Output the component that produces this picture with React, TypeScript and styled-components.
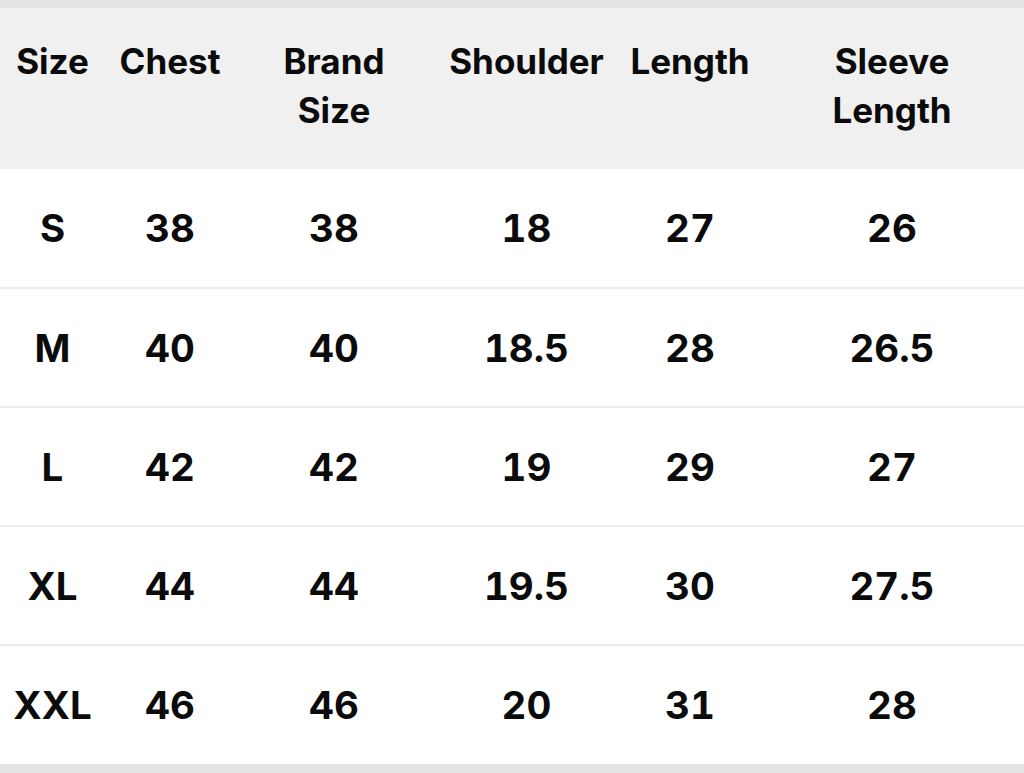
import styled, { createGlobalStyle } from "styled-components";

const GlobalStyle = createGlobalStyle`
  html, body {
    margin: 0;
    padding: 0;
    background: #ffffff;
  }
  body {
    font-family: Inter, "Noto Sans", sans-serif;
    color: #0b0b0b;
  }
`;

const Page = styled.div`
  display: flex;
  flex-direction: column;
  width: 1024px;
  height: 773px;
  overflow: hidden;
  background: #ffffff;
`;

const Strip = styled.div<{ $h: number }>`
  height: ${(p) => p.$h}px;
  background: #e4e4e4;
  flex-shrink: 0;
`;

const Table = styled.table`
  width: 100%;
  border-collapse: collapse;
  table-layout: fixed;
  flex: 1;
`;

const HeadRow = styled.tr`
  background: #f0f0f0;
  height: 161px;
`;

const HeadCell = styled.th`
  vertical-align: top;
  padding: 29px 0 0 0;
  font-size: 35px;
  line-height: 49px;
  font-weight: 700;
  text-align: center;
`;

const BodyRow = styled.tr<{ $last?: boolean }>`
  height: 117px;
  border-bottom: ${(p) => (p.$last ? "none" : "2px solid #ececec")};
`;

const Cell = styled.td`
  vertical-align: middle;
  text-align: center;
  font-size: 38.5px;
  font-weight: 700;
  font-variant-numeric: tabular-nums;
  padding: 0;
`;

const widths = [105, 130, 198, 187, 140, 264];
const headers = ["Size", "Chest", "Brand Size", "Shoulder", "Length", "Sleeve Length"];
const rows = [
  ["S", "38", "38", "18", "27", "26"],
  ["M", "40", "40", "18.5", "28", "26.5"],
  ["L", "42", "42", "19", "29", "27"],
  ["XL", "44", "44", "19.5", "30", "27.5"],
  ["XXL", "46", "46", "20", "31", "28"],
];

const App = () => {
  return (
    <>
      <GlobalStyle />
      <Page>
        <Strip $h={8} />
        <Table>
          <colgroup>
            {widths.map((w, i) => (
              <col key={i} style={{ width: w }} />
            ))}
          </colgroup>
          <thead>
            <HeadRow>
              {headers.map((h) => (
                <HeadCell key={h}>
                  {h.split(" ").map((part, i) => (
                    <div key={i}>{part}</div>
                  ))}
                </HeadCell>
              ))}
            </HeadRow>
          </thead>
          <tbody>
            {rows.map((r, i) => (
              <BodyRow key={r[0]} $last={i === rows.length - 1}>
                {r.map((v, j) => (
                  <Cell key={j}>{v}</Cell>
                ))}
              </BodyRow>
            ))}
          </tbody>
        </Table>
        <Strip $h={9} />
      </Page>
    </>
  );
};

export default App;
